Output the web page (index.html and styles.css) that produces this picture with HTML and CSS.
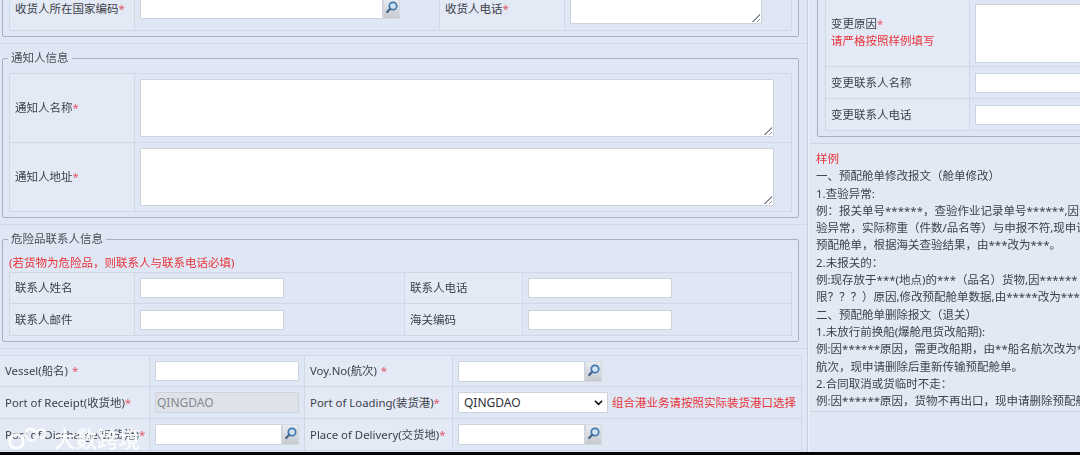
FILE: index.html
```html
<!DOCTYPE html>
<html lang="zh">
<head>
<meta charset="utf-8">
<title>预配舱单修改</title>
<link rel="stylesheet" href="styles.css">
</head>
<body>
<svg class="defs" width="0" height="0" aria-hidden="true"><symbol id="lens" viewBox="0 0 15 19"><circle cx="9" cy="7" r="3.7" fill="#d3e3f2" stroke="#4077ad" stroke-width="1.7"/><path d="M6.2 9.8 3.2 13" stroke="#44648a" stroke-width="2.3" stroke-linecap="round" fill="none"/></symbol></svg>
<div class="page">
  <main class="left">
    <section class="sec sec-top">
      <div class="box box-top">
        <div class="grid g-top">
          <div class="lab">收货人所在国家编码<i>*</i></div>
          <div class="val"><span class="lookup lk-wide"><span class="inp"></span><span class="btn"><svg><use href="#lens"/></svg></span></span></div>
          <div class="lab">收货人电话<i>*</i></div>
          <div class="val"><span class="ta ta-phone"></span></div>
        </div>
      </div>
    </section>

    <section class="sec">
      <fieldset class="box">
        <legend>通知人信息</legend>
        <div class="grid g-notify">
          <div class="lab">通知人名称<i>*</i></div>
          <div class="val"><span class="ta ta-notify"></span></div>
          <div class="lab">通知人地址<i>*</i></div>
          <div class="val"><span class="ta ta-notify"></span></div>
        </div>
      </fieldset>
    </section>

    <section class="sec sec-danger">
      <fieldset class="box box-danger">
        <legend>危险品联系人信息</legend>
        <p class="red note">(若货物为危险品，则联系人与联系电话必填)</p>
        <div class="grid g-danger">
          <div class="lab">联系人姓名</div>
          <div class="val"><span class="inp w144 h20"></span></div>
          <div class="lab">联系人电话</div>
          <div class="val"><span class="inp w144 h20"></span></div>
          <div class="lab">联系人邮件</div>
          <div class="val"><span class="inp w144 h20"></span></div>
          <div class="lab">海关编码</div>
          <div class="val"><span class="inp w144 h20"></span></div>
        </div>
      </fieldset>
    </section>

    <div class="grid g-ports">
      <div class="lab">Vessel(船名)<i class="sp">*</i></div>
      <div class="val"><span class="inp w144 h20"></span></div>
      <div class="lab">Voy.No(航次)<i class="sp">*</i></div>
      <div class="val"><span class="lookup"><span class="inp"></span><span class="btn"><svg><use href="#lens"/></svg></span></span></div>
      <div class="lab">Port of Receipt(收货地)<i>*</i></div>
      <div class="val"><span class="inp w144 off">QINGDAO</span></div>
      <div class="lab">Port of Loading(装货港)<i>*</i></div>
      <div class="val"><span class="sel">QINGDAO<svg viewBox="0 0 10 6"><path d="M1 1l4 4 4-4" fill="none" stroke="#111" stroke-width="1.8"/></svg></span><span class="red hint">组合港业务请按照实际装货港口选择</span></div>
      <div class="lab">Port of Discharge(卸货港)<i>*</i></div>
      <div class="val"><span class="lookup"><span class="inp"></span><span class="btn"><svg><use href="#lens"/></svg></span></span></div>
      <div class="lab">Place of Delivery(交货地)<i>*</i></div>
      <div class="val"><span class="lookup"><span class="inp"></span><span class="btn"><svg><use href="#lens"/></svg></span></span></div>
    </div>
  </main>

  <aside class="right">
    <div class="box box-change">
      <div class="grid g-change">
        <div class="lab"><div>变更原因<i>*</i></div><div class="red">请严格按照样例填写</div></div>
        <div class="val"><span class="inp reason"></span></div>
        <div class="lab">变更联系人名称</div>
        <div class="val"><span class="inp full"></span></div>
        <div class="lab">变更联系人电话</div>
        <div class="val"><span class="inp full"></span></div>
      </div>
    </div>
    <div class="sample">
      <div class="red">样例</div>
      <div>一、预配舱单修改报文（舱单修改）</div>
      <div>1.查验异常:</div>
      <div>例：报关单号******，查验作业记录单号******,因海关查</div>
      <div>验异常，实际称重（件数/品名等）与申报不符,现申请修改</div>
      <div>预配舱单，根据海关查验结果，由***改为***。</div>
      <div>2.未报关的：</div>
      <div>例:现存放于***(地点)的***（品名）货物,因******（期限?</div>
      <div>限？？？）原因,修改预配舱单数据,由*****改为*****</div>
      <div>二、预配舱单删除报文（退关）</div>
      <div>1.未放行前换船(爆舱甩货改船期):</div>
      <div>例:因******原因，需更改船期，由**船名航次改为**船名</div>
      <div>航次，现申请删除后重新传输预配舱单。</div>
      <div>2.合同取消或货临时不走：</div>
      <div>例:因******原因，货物不再出口，现申请删除预配舱单。</div>
    </div>
  </aside>
</div>
<div class="mark"><svg viewBox="0 0 46 28"><circle cx="11" cy="17" r="7" fill="none" stroke="#fff" stroke-width="3"/><circle cx="26" cy="10" r="6" fill="none" stroke="#fff" stroke-width="2.5"/><circle cx="37" cy="9" r="4.5" fill="none" stroke="#fff" stroke-width="2.5"/></svg><span>大数跨境</span></div>
<div class="endbar"></div>
</body>
</html>
```

FILE: styles.css
```css
* { box-sizing: border-box; }
html, body { margin: 0; padding: 0; }
body {
  width: 1080px;
  height: 455px;
  overflow: hidden;
  position: relative;
  background: #e0e7f4;
  color: #3d4249;
  font: 11.5px/14px "Noto Sans", "Noto Sans CJK SC", sans-serif;
}
.defs { position: absolute; }
.page {
  display: flex;
  height: 452px;
  overflow: hidden;
  filter: blur(0.45px);
}
.left {
  width: 808px;
  flex: none;
  border-right: 1px solid #c5cedb;
}
.right {
  flex: 1;
  min-width: 0;
  padding-left: 2px;
  border-left: 1px solid #eef2f8;
}
i { font-style: normal; color: #e4566a; }
i.sp { margin-left: 4px; }
.red { color: #e8333a; }

.sec {
  padding-bottom: 6px;
  margin-bottom: 7px;
  border-bottom: 1px solid #d2dae7;
}
.sec-top { margin-top: -21px; }
.sec-danger { margin-bottom: 6px; }
.box {
  margin: 0 8px 0 2px;
  padding: 8px 6px 5px;
  min-width: 0;
  border: 1px solid #a8b0bb;
  border-radius: 2px;
}
.box-top { padding-top: 6px; }
.box-danger { padding-top: 0; }
legend {
  padding: 0 3px;
  margin-left: -1px;
  font-size: 11.5px;
  line-height: 14px;
  color: #4a4f56;
}
.note { margin: 10px 0 3px; height: 13px; line-height: 13px; }

.grid {
  display: grid;
  border: 1px solid #d0d8e5;
  border-width: 1px 0 0 1px;
}
.lab, .val {
  display: flex;
  align-items: center;
  border: 1px solid #d0d8e5;
  border-width: 0 1px 1px 0;
  white-space: nowrap;
  overflow: hidden;
}
.lab { padding-left: 5px; background: #e3e9f5; }
.val { padding-left: 5px; background: #dfe7f5; }

.g-top { grid-template-columns: 125px 305px 125px 1fr; grid-auto-rows: 44px; }
.g-notify { grid-template-columns: 125px 1fr; grid-auto-rows: 69px; }
.g-danger { grid-template-columns: 125px 270px 118px 1fr; grid-template-rows: 31px 32px; }
.g-ports {
  width: 802px;
  grid-template-columns: 150px 155px 148px 1fr;
  grid-template-rows: 31px 32px 32px;
  font-size: 11.4px;
  border-left: 0;
}

.inp, .ta, .sel {
  display: block;
  background: #fff;
  border: 1px solid #cdd3dc;
  border-radius: 1px;
}
.inp { height: 21px; }
.h20 { height: 20px; }
.w144 { width: 144px; }
.off {
  background: #dfe2e8;
  color: #858a92;
  padding-left: 1px;
  font-size: 12px;
  line-height: 19px;
}
.lookup { display: flex; width: 144px; align-items: stretch; }
.lookup .inp { flex: 1; }
.lk-wide { width: 260px; }
.btn {
  width: 17px;
  height: 21px;
  flex: none;
  background: linear-gradient(#e8ebf1, #c6c9ce);
  border: 1px solid #d4d8df;
}
.btn svg { display: block; width: 15px; height: 19px; }

.ta { position: relative; }
.ta::after {
  content: "";
  position: absolute;
  right: 1px;
  bottom: 1px;
  width: 8px;
  height: 8px;
  background: linear-gradient(135deg, transparent 50%, #8b8f96 50%, #8b8f96 58%, transparent 58%, transparent 76%, #8b8f96 76%, #8b8f96 84%, transparent 84%);
}
.ta-phone { width: 192px; height: 30px; }
.ta-notify { width: 634px; height: 58px; }

.sel {
  position: relative;
  width: 150px;
  height: 21px;
  padding-left: 5px;
  color: #2e3237;
  font-size: 12px;
  line-height: 19px;
}
.sel svg { position: absolute; right: 4px; top: 6px; width: 9px; height: 7px; }
.hint { margin-left: 4px; font-size: 11.5px; }

.box-change {
  width: 350px;
  margin: -37px 0 0 6px;
  padding: 0 6px 5px 7px;
}
.g-change { grid-template-columns: 144px 1fr; grid-template-rows: 102px 32px 32px; overflow: hidden; }
.g-change .lab:first-child { display: block; padding-top: 50px; line-height: 17px; }
.reason { width: 125px; height: 59px; margin-top: 36px; }
.full { width: 125px; height: 20px; }

.sample {
  margin: 6px 0 0 -1px;
  padding: 6px 0 5px 6px;
  height: 269px;
  border-top: 1px solid #ccd4e1;
  border-bottom: 1px solid #ccd4e1;
  background: #e2e8f4;
  line-height: 17.3px;
  font-size: 11.5px;
  white-space: nowrap;
  overflow: hidden;
}

.mark {
  position: absolute;
  left: 5px;
  top: 425px;
  display: flex;
  align-items: center;
  gap: 3px;
  opacity: .9;
}
.mark svg { width: 46px; height: 27px; }
.mark span { color: #fff; font-size: 21.5px; line-height: 27px; font-weight: 500; }
.endbar {
  position: absolute;
  left: 0;
  right: 0;
  bottom: 0;
  height: 3px;
  background: #050505;
}
```
